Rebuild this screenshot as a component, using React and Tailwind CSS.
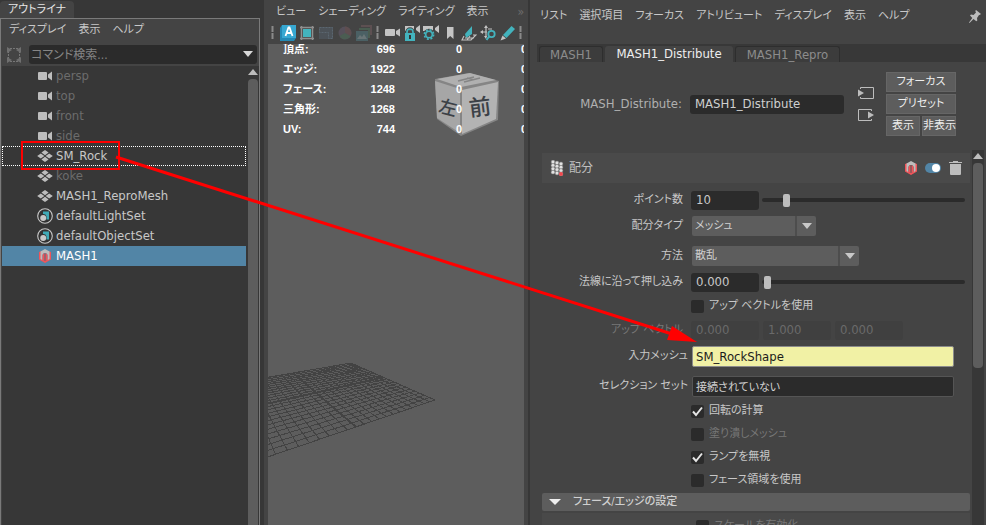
import React from "react";
import clsx from "clsx";

const outlinerRows = [
  { name: "persp", icon: "camera", dim: true },
  { name: "top", icon: "camera", dim: true },
  { name: "front", icon: "camera", dim: true },
  { name: "side", icon: "camera", dim: true },
  { name: "SM_Rock", icon: "mesh", focused: true },
  { name: "koke", icon: "mesh", dim: true },
  { name: "MASH1_ReproMesh", icon: "mesh" },
  { name: "defaultLightSet", icon: "set" },
  { name: "defaultObjectSet", icon: "set" },
  { name: "MASH1", icon: "mash", selected: true },
];

const hudRows = [
  ["頂点:", "696"],
  ["エッジ:", "1922"],
  ["フェース:", "1248"],
  ["三角形:", "1268"],
  ["UV:", "744"],
];

/* ---------- icons ---------- */

function CameraIcon() {
  return (
    <svg width="16" height="16" viewBox="0 0 16 16" fill="#bdbdbd">
      <rect x="1" y="4" width="9" height="8" rx="1" />
      <path d="M15 3.5v9l-4-3v-3z" />
    </svg>
  );
}

function MeshIcon() {
  return (
    <svg width="16" height="16" viewBox="0 0 16 16" fill="#bdbdbd">
      <path d="M8 2l3.6 2.6L8 7.2 4.4 4.6zM8 8.8l3.6 2.6L8 14l-3.6-2.6zM3.8 5.4L7.4 8l-3.6 2.6L.2 8zM12.2 5.4L15.8 8l-3.6 2.6L8.6 8z" />
    </svg>
  );
}

function SetIcon() {
  return (
    <svg width="16" height="16" viewBox="0 0 16 16">
      <circle cx="8" cy="8" r="7.3" fill="#333" stroke="#c8c8c8" strokeWidth="1.1" />
      <path d="M6 3.5h6v8H9.500V8.500A3 3 0 0 0 6 6z" fill="#3fa9b5" />
      <circle cx="6.200" cy="10" r="3" fill="#c8c8c8" />
    </svg>
  );
}

function MashIcon() {
  return (
    <svg className="shrink-0" width="16" height="16" viewBox="0 0 16 16">
      <path d="M2 4L5 3v8.500l3 1.500 3-1.500V3l3 1v7.500L8 15l-6-3.500z" fill="#f0545a" />
      <path d="M3.500 3.500L8 1l4.500 2.500V11l-2 1.200V7.500a2.500 2.500 0 0 0-5 0v4.700l-2-1.200z" fill="#bdbdbd" />
      <path d="M5.500 7.500a2.500 2.500 0 0 1 1.800-2.300V13l-1.800-.8zM10.500 7.500a2.500 2.500 0 0 0-1.800-2.300V13l1.800-.8z" fill="#f0545a" />
      <path d="M7.300 5.500h1.400V13H7.300z" fill="#a85b5f" />
    </svg>
  );
}

function DistributeIcon() {
  return (
    <svg width="14" height="16" viewBox="0 0 14 16">
      <g fill="#e2e2e2" stroke="#777" strokeWidth=".5">
        {[0, 1, 2].map((col) =>
          [0, 1, 2, 3].map((row) => (
            <circle key={`${col}-${row}`} cx={3 + col * 4} cy={2 + row * 3.4 + col * 0.9} r="1.9" />
          ))
        )}
      </g>
      <circle cx="11" cy="14" r="2" fill="#f0484e" />
    </svg>
  );
}

const rowIcons = { camera: CameraIcon, mesh: MeshIcon, set: SetIcon, mash: MashIcon };

function Grip() {
  return (
    <svg className="shrink-0" width="10" height="18" viewBox="0 0 10 18">
      <path d="M4.500 2v14" stroke="#8a8a8a" strokeWidth="2" strokeDasharray="6 1" />
    </svg>
  );
}

function ToolButton({ label, children }) {
  return (
    <button type="button" aria-label={label} className="flex w-[19px] shrink-0 items-center justify-center">
      <svg width="16" height="16" viewBox="0 0 16 16">
        {children}
      </svg>
    </button>
  );
}

function ViewportToolbar() {
  return (
    <div className="flex h-[22px] items-center overflow-hidden">
      <Grip />
      <ToolButton label="Arnold">
        <path d="M0 3l2-3h14v13l-2 3H0z" fill="#2389b5" />
        <rect x="2" y="0" width="14" height="13" fill="#37a8d2" />
        <path d="M5.500 11L8.500 2.500h1l3 8.500M6.700 8h4.600" fill="none" stroke="#fff" strokeWidth="1.800" />
      </ToolButton>
      <ToolButton label="選択項目の分離">
        <path d="M2.500 1v14M13.500 1v14M1 2.500h14M1 13.500h14" stroke="#8f8f8f" strokeWidth="1.500" />
        <rect x="4" y="4" width="8" height="8" fill="#43b3bd" />
      </ToolButton>
      <ToolButton label="レンダー領域">
        <rect x="1" y="2" width="14" height="12" fill="#4c5258" />
        <path d="M1.500 2.500h13v11h-4V7.500h-9z" fill="none" stroke="#5b6670" strokeDasharray="2 1" />
      </ToolButton>
      <ToolButton label="カラー">
        <circle cx="8" cy="8" r="6.500" fill="#56505a" />
        <path d="M8 8V1.500A6.500 6.500 0 0 1 13.600 11z" fill="#5f4e50" />
        <path d="M8 8l5.600 3.200A6.500 6.500 0 0 1 2.400 11z" fill="#4b5d52" />
      </ToolButton>
      <ToolButton label="イメージ">
        <path d="M5 1h10v9" fill="none" stroke="#5d5052" strokeWidth="2" />
        <path d="M3 4h10v9" fill="none" stroke="#4a5d51" strokeWidth="2" />
        <rect x="0" y="6" width="12" height="10" fill="#4b6064" />
        <path d="M1 14l3-4 2 2 2-3 3 5z" fill="#6a7577" />
      </ToolButton>
      <Grip />
      <ToolButton label="カメラを選択">
        <rect x="0" y="4" width="10" height="7" rx="1" fill="#c4c4c4" />
        <path d="M15 3.500v8L11 9V6z" fill="#c4c4c4" />
      </ToolButton>
      <ToolButton label="カメラをロック">
        <path d="M1 6V1h9v5M16 0v8l-4-3V3z" fill="#c4c4c4" />
        <path d="M3 8.500V7a3 3 0 0 1 6 0v1.500" fill="none" stroke="#444" strokeWidth="3.500" />
        <path d="M3 8.500V7a3 3 0 0 1 6 0v1.500" fill="none" stroke="#43b3bd" strokeWidth="1.600" />
        <rect x="1" y="8" width="10" height="8" fill="#43b3bd" />
        <rect x="5" y="10" width="2" height="4" fill="#333" />
      </ToolButton>
      <ToolButton label="カメラ アトリビュート">
        <path d="M0 6V1h10v5M16 0v8l-4-3V3z" fill="#c4c4c4" />
        <circle cx="6" cy="9.500" r="5.800" fill="#444" />
        <circle cx="6" cy="9.500" r="3.300" fill="none" stroke="#43b3bd" strokeWidth="1.600" />
        <circle cx="6" cy="9.500" r="4.700" fill="none" stroke="#43b3bd" strokeWidth="1.500" strokeDasharray="2 1.690" />
      </ToolButton>
      <ToolButton label="ブックマーク">
        <path d="M5 2h6.500v12L8.200 11 5 14z" fill="#c4c4c4" />
      </ToolButton>
      <ToolButton label="イメージ プレーン">
        <path d="M4 9l7-8v8l-6 4z" fill="#43b3bd" />
        <path d="M3 11l-2 4h9l5-5h-3M4 13h9M9 11l-3 4" fill="none" stroke="#c4c4c4" strokeWidth="1.100" />
      </ToolButton>
      <ToolButton label="2D パン/ズーム">
        <path d="M6 0l2 3H4zM0 7l3-2v4zM6 14l-2-3h3z" fill="#c4c4c4" />
        <path d="M6 2v10M2 7h5M8 4h4" stroke="#c4c4c4" strokeWidth="1.200" />
        <circle cx="11.500" cy="9" r="3.200" fill="none" stroke="#43b3bd" strokeWidth="1.800" />
        <path d="M9.200 11.300L6.500 15" stroke="#43b3bd" strokeWidth="2" />
      </ToolButton>
      <ToolButton label="グリース ペンシル">
        <path d="M12.500 1L16 4 7.500 13 4 10z" fill="#43b3bd" />
        <path d="M3.500 10.500L7 13.500 1.500 15.500z" fill="#c4c4c4" />
      </ToolButton>
      <Grip />
    </div>
  );
}

/* ---------- outliner ---------- */

function MenuBar({ items, className }) {
  return (
    <nav className={clsx("flex items-center gap-3 overflow-hidden whitespace-nowrap text-[11px] text-[#c8c8c8]", className)}>
      {items.map((item) => (
        <button key={item} type="button">
          {item}
        </button>
      ))}
    </nav>
  );
}

function Outliner() {
  return (
    <aside className="flex w-[262px] shrink-0 flex-col bg-[#373737]">
      <div className="mt-px h-[17px] w-[74px] rounded-t-sm bg-[#444444] text-center text-[11px] leading-[17px] text-[#e6e6e6]">
        アウトライナ
      </div>
      <div className="mr-[2px] flex min-h-0 flex-1 flex-col border border-b-0 border-[#7a7a7a] bg-[#444444]">
        <MenuBar className="h-[22px] pl-2" items={["ディスプレイ", "表示", "ヘルプ"]} />
        <div className="flex items-center pt-1 pb-[2px] pl-[6px] pr-[2px]">
          <svg className="mr-2 shrink-0" width="14" height="16" viewBox="0 0 14 16">
            <path d="M3 1.500h8M3 14.500h8M1.500 4v8M12.500 4v8" stroke="#777" strokeDasharray="2 1" />
            <path d="M0 0l5 3-5 3zM14 0L9 3l5 3zM0 16l5-3-5-3zM14 16l-5-3 5-3z" fill="#6f6f6f" />
          </svg>
          <div className="relative flex-1">
            <input
              type="text"
              aria-label="コマンド検索"
              placeholder="コマンド検索..."
              className="block h-[19px] w-full rounded-[3px] bg-[#2b2b2b] px-[2px] text-xs text-[#c8c8c8] outline-none placeholder:text-[#858585]"
            />
            <svg className="absolute top-[6px] right-1" width="10" height="6" viewBox="0 0 10 6">
              <path d="M0 0h10L5 6z" fill="#d8d8d8" />
            </svg>
          </div>
        </div>
        <div className="flex min-h-0 flex-1 pl-px">
          <ul className="flex-1 bg-[#373737] text-[13px]">
            {outlinerRows.map((row) => {
              const Icon = rowIcons[row.icon];
              return (
                <li
                  key={row.name}
                  className={clsx(
                    "flex h-5 items-center gap-[3px] border border-transparent pl-[34px]",
                    row.focused && "border-dotted border-white!",
                    row.selected && "bg-[#5285a6]",
                    row.dim ? "text-[#6c6c6c]" : row.selected ? "text-white" : "text-[#c8c8c8]"
                  )}
                >
                  <Icon />
                  <span>{row.name}</span>
                </li>
              );
            })}
          </ul>
          <div className="flex w-[13px] flex-col items-center bg-[#373737] pt-[3px]">
            <svg width="10" height="6" viewBox="0 0 10 6">
              <path d="M5 0l5 6H0z" fill="#bdbdbd" />
            </svg>
            <div className="mt-1 w-[10px] flex-1 rounded-t-[4px] bg-[#5d5d5d]" />
          </div>
        </div>
      </div>
    </aside>
  );
}

/* ---------- viewport ---------- */

// Perspective mapping of the ground plane onto the viewport.
// u runs from the far corner to the right corner, v runs to the left.
function project(u, v) {
  const w = 1 - 0.3695 * u - 0.13 * v;
  return [(83 + 22.3 * u - 61.3 * v) / w, (19 + 16.3 * u + 6.2 * v) / w];
}

const gridLines = [];
for (let i = 0; i <= 24; i++) {
  const t = i / 24;
  gridLines.push({ from: project(t, 0), to: project(t, 2), axis: i === 12 });
  gridLines.push({ from: project(0, t * 2), to: project(1, t * 2), axis: i === 12 });
}

function GroundGrid() {
  return (
    <svg className="absolute top-[300px] left-0" width="200" height="150" viewBox="0 0 200 150" shapeRendering="crispEdges">
      {gridLines.map((line, i) => (
        <line
          key={i}
          x1={line.from[0]}
          y1={line.from[1]}
          x2={line.to[0]}
          y2={line.to[1]}
          stroke="#434343"
          strokeWidth={line.axis ? 2 : 1}
        />
      ))}
    </svg>
  );
}

function ViewCube() {
  return (
    <svg className="absolute top-[28px] left-[166px]" width="68" height="66" viewBox="0 0 68 66">
      <path d="M1 7L35 1l30 8-1 39-37 16L3 47z" fill="#858585" />
      <path d="M3 7L36 1l26 7-35 7z" fill="#b0b0b0" />
      <path d="M1 9l25 8v44L3 46z" fill="#a6a6a6" />
      <path d="M28 18l36-8-2 37-34 15z" fill="#b3b3b3" />
      <path d="M24 9l16-4M30 10l16-4M33 6l7 2" stroke="#858585" strokeWidth="1.5" />
      <text x="14" y="42" fontSize="18" fontWeight="500" fill="#3c4147" textAnchor="middle" transform="rotate(14 14 36)">左</text>
      <text x="46" y="43" fontSize="22" fontWeight="500" fill="#3c4147" textAnchor="middle" transform="rotate(-7 46 36)">前</text>
    </svg>
  );
}

function Viewport() {
  return (
    <main className="flex w-[268px] shrink-0 flex-col border-x-2 border-[#373737] bg-[#444444] px-1">
      <div className="flex h-[22px] items-center justify-between pt-[2px] pl-2">
        <MenuBar items={["ビュー", "シェーディング", "ライティング", "表示"]} />
        <span className="text-xs text-[#6c6c6c]">»</span>
      </div>
      <ViewportToolbar />
      <div className="relative flex-1 overflow-hidden bg-[#5d5d5d]">
        <GroundGrid />
        <ViewCube />
        <div className="relative -mt-[5px] font-['Liberation_Sans','Noto_Sans_CJK_JP',sans-serif] text-[11px] font-bold text-white">
          {hudRows.map(([label, value]) => (
            <div key={label} className="flex h-5 items-center whitespace-nowrap pl-[15px]">
              <span className="w-[52px] shrink-0">{label}</span>
              <span className="w-[60px] shrink-0 text-right">{value}</span>
              <span className="w-[67px] shrink-0 text-right">0</span>
              <span className="w-[65px] shrink-0 text-right">0</span>
            </div>
          ))}
        </div>
      </div>
    </main>
  );
}

/* ---------- attribute editor ---------- */

function Field({ label, htmlFor, wide, disabled, className, children }) {
  return (
    <div className={clsx("flex h-5 items-center", wide ? "gap-1" : "gap-2", className)}>
      <label
        htmlFor={htmlFor}
        className={clsx(
          "shrink-0 text-right text-[11px] whitespace-nowrap",
          wide ? "w-[146px]" : "w-[141px]",
          disabled ? "text-[#777777]" : "text-[#c8c8c8]"
        )}
      >
        {label}
      </label>
      {children}
    </div>
  );
}

function NumberBox({ id, value, label, disabled }) {
  return (
    <input
      id={id}
      type="text"
      aria-label={label}
      defaultValue={value}
      disabled={disabled}
      className="h-[19px] w-[68px] shrink-0 rounded-[3px] bg-[#2b2b2b] px-[5px] text-[13px] text-[#c8c8c8] disabled:bg-[#404040] disabled:text-[#6a6a6a]"
    />
  );
}

function Slider({ label, value, max }) {
  return (
    <input
      type="range"
      aria-label={label}
      defaultValue={value}
      max={max}
      className="mr-[5px] ml-[-5px] h-[13px] min-w-0 flex-1 appearance-none bg-transparent [&::-webkit-slider-runnable-track]:h-1 [&::-webkit-slider-runnable-track]:rounded-full [&::-webkit-slider-runnable-track]:bg-[#2b2b2b] [&::-webkit-slider-thumb]:-mt-1 [&::-webkit-slider-thumb]:h-[13px] [&::-webkit-slider-thumb]:w-[7px] [&::-webkit-slider-thumb]:appearance-none [&::-webkit-slider-thumb]:rounded-[2px] [&::-webkit-slider-thumb]:bg-[#bdbdbd]"
    />
  );
}

function Dropdown({ id, value, className }) {
  return (
    <div className={clsx("relative ml-px", className)}>
      <select id={id} defaultValue={value} className="block h-5 w-full appearance-none rounded-[2px] bg-[#5d5d5d] px-[3px] text-[11px] text-[#d0d0d0]">
        <option>{value}</option>
      </select>
      <span className="pointer-events-none absolute inset-y-0 right-0 flex w-[21px] items-center justify-center border-l-2 border-[#4d4d4d]">
        <svg width="10" height="6" viewBox="0 0 10 6">
          <path d="M0 0h10L5 6z" fill="#c8c8c8" />
        </svg>
      </span>
    </div>
  );
}

function Checkbox({ label, checked, disabled, className }) {
  return (
    <label className={clsx("flex items-center gap-[5px] text-[11px] whitespace-nowrap", disabled ? "text-[#777777]" : "text-[#c8c8c8]", className)}>
      <span className="relative h-[13px] w-[13px]">
        <input
          type="checkbox"
          defaultChecked={checked}
          disabled={disabled}
          className="peer block h-[13px] w-[13px] appearance-none rounded-[2px] bg-[#2b2b2b]"
        />
        <svg className="pointer-events-none absolute inset-0 hidden peer-checked:block" width="13" height="13" viewBox="0 0 13 13">
          <path d="M2 6.500l3 3.500 6-7.500" fill="none" stroke="#e6e6e6" strokeWidth="2" />
        </svg>
      </span>
      {label}
    </label>
  );
}

function PanelButton({ children, className }) {
  return (
    <button
      type="button"
      className={clsx("h-5 border border-[#666666] bg-[#5d5d5d] text-center text-[11px] leading-[18px] whitespace-nowrap text-[#eeeeee]", className)}
    >
      {children}
    </button>
  );
}

function EditorTabs() {
  return (
    <div className="ml-[7px] flex h-[18px] shrink-0 items-end gap-[2px] overflow-hidden bg-[#383838] pl-[2px] text-[13px]">
      <button type="button" className="h-4 w-16 rounded-t-[3px] border border-b-0 border-[#2e2e2e] bg-[#3c3c3c] leading-4 text-[#8c8c8c]">MASH1</button>
      <button type="button" className="h-4 w-32 rounded-t-[3px] bg-[#444444] leading-4 text-[#eeeeee]">MASH1_Distribute</button>
      <button type="button" className="h-4 w-[105px] rounded-t-[3px] border border-b-0 border-[#2e2e2e] bg-[#3c3c3c] leading-4 text-[#8c8c8c]">MASH1_Repro</button>
    </div>
  );
}

function NodeHeader() {
  return (
    <div className="flex h-[88px] shrink-0 pt-[10px] pr-[30px] pl-3">
      <div className="flex h-16 flex-1 items-center">
        <label htmlFor="node-name" className="w-[140px] shrink-0 text-right text-[13px] text-[#b0b0b0]">
          MASH_Distribute:
        </label>
        <input
          id="node-name"
          type="text"
          defaultValue="MASH1_Distribute"
          className="ml-2 h-[19px] w-[154px] min-w-0 rounded-[3px] bg-[#2b2b2b] px-[5px] text-[13px] text-[#d0d0d0]"
        />
        <div className="ml-[13px] flex shrink-0 flex-col gap-2">
          <svg width="18" height="14" viewBox="0 0 18 14">
            <path d="M3.500 3V1.500h13v11h-13V11" fill="none" stroke="#bdbdbd" />
            <path d="M1 3.500l6 3.500-6 3.500z" fill="#bdbdbd" />
          </svg>
          <svg width="18" height="14" viewBox="0 0 18 14">
            <path d="M14.500 3V1.500H1.500v11h13V11" fill="none" stroke="#bdbdbd" />
            <path d="M11 3.500l6 3.500-6 3.500z" fill="#bdbdbd" />
          </svg>
        </div>
      </div>
      <div className="grid h-16 w-[70px] shrink-0 grid-cols-2 gap-[2px]">
        <PanelButton className="col-span-2">フォーカス</PanelButton>
        <PanelButton className="col-span-2">プリセット</PanelButton>
        <PanelButton>表示</PanelButton>
        <PanelButton>非表示</PanelButton>
      </div>
    </div>
  );
}

function DistributeHeader() {
  return (
    <div className="flex h-[30px] items-center bg-[#4a4a4a] pr-2 pl-2 text-xs text-[#c0c0c0]">
      <DistributeIcon />
      <span className="ml-[5px] flex-1">配分</span>
      <MashIcon />
      <label className="relative ml-[6px] flex h-[10px] w-4">
        <input type="checkbox" defaultChecked aria-label="有効化" className="h-[10px] w-4 appearance-none rounded-full bg-[#5285a6]" />
        <span className="pointer-events-none absolute top-px right-px h-2 w-2 rounded-full bg-white" />
      </label>
      <button type="button" aria-label="削除" className="ml-2">
        <svg width="13" height="14" viewBox="0 0 13 14" fill="#bdbdbd">
          <path d="M0 1h4V0h5v1h4v1H0zM1 3h11v10a1 1 0 0 1-1 1H2a1 1 0 0 1-1-1z" />
        </svg>
      </button>
    </div>
  );
}

function AttributeEditor() {
  return (
    <section className="flex min-w-0 flex-1 flex-col bg-[#444444]">
      <div className="flex h-11 shrink-0 items-start pt-[6px] pr-[5px] pl-[10px]">
        <MenuBar className="h-5 flex-1" items={["リスト", "選択項目", "フォーカス", "アトリビュート", "ディスプレイ", "表示", "ヘルプ"]} />
        <button type="button" aria-label="ピン" className="mt-1">
          <svg width="12" height="13" viewBox="0 0 12 13" fill="#bdbdbd">
            <path d="M7 0l5 4-1.500 1L10 5 8 8l.3 2.500-1 .8L4.500 9 .5 13 0 12.500 3.300 8 1 5.500l1-1L4.500 5 7 2.500 6.300 1z" />
          </svg>
        </button>
      </div>
      <EditorTabs />
      <NodeHeader />

      <div className="flex min-h-0 flex-1">
        <div className="min-w-0 flex-1 overflow-hidden pt-[3px] pl-3">
          <DistributeHeader />

          <div className="pt-[7px]">
            <Field label="ポイント数" htmlFor="points">
              <NumberBox id="points" value="10" />
              <Slider label="ポイント数スライダ" value={10} max={95} />
            </Field>
            <Field className="mt-[6px]" label="配分タイプ" htmlFor="dist-type">
              <Dropdown id="dist-type" value="メッシュ" className="w-[124px]" />
            </Field>
            <Field className="mt-[10px]" label="方法" htmlFor="method">
              <Dropdown id="method" value="散乱" className="w-[167px]" />
            </Field>
            <Field className="mt-[6px]" label="法線に沿って押し込み" htmlFor="push">
              <NumberBox id="push" value="0.000" />
              <Slider label="押し込みスライダ" value={1} max={100} />
            </Field>
            <Checkbox className="mt-1 ml-[149px] h-5" label="アップ ベクトルを使用" />
            <Field className="mt-1" label="アップ ベクトル" htmlFor="up-x" disabled>
              <div className="flex gap-1">
                <NumberBox id="up-x" value="0.000" disabled />
                <NumberBox label="Y" value="1.000" disabled />
                <NumberBox label="Z" value="0.000" disabled />
              </div>
            </Field>
            <Field className="mt-[6px]" wide label="入力メッシュ" htmlFor="input-mesh">
              <input
                id="input-mesh"
                type="text"
                defaultValue="SM_RockShape"
                className="mr-4 h-[21px] min-w-0 flex-1 rounded-[2px] border border-[#8c8c8c] bg-[#f1f1a5] px-[3px] text-[13px] text-[#1c1c1c]"
              />
            </Field>
            <Field className="mt-[10px]" wide label="セレクション セット" htmlFor="selection-set">
              <input
                id="selection-set"
                type="text"
                defaultValue="接続されていない"
                className="mr-4 h-[21px] min-w-0 flex-1 rounded-[2px] border border-[#555555] bg-[#2b2b2b] px-[3px] text-[11px] text-[#d0d0d0]"
              />
            </Field>
            <div className="mt-1 ml-[149px]">
              <Checkbox className="h-[23px]" label="回転の計算" checked />
              <Checkbox className="h-[23px]" label="塗り潰しメッシュ" disabled />
              <Checkbox className="h-[23px]" label="ランプを無視" checked />
              <Checkbox className="h-[23px]" label="フェース領域を使用" />
            </div>
          </div>

          <button type="button" className="mt-px flex h-[18px] w-full items-center gap-3 rounded-[2px] bg-[#5d5d5d] pl-[7px] text-[11px] font-medium text-[#d0d0d0]">
            <svg width="12" height="6" viewBox="0 0 12 6">
              <path d="M0 0h12L6 6z" fill="#eeeeee" />
            </svg>
            フェース/エッジの設定
          </button>
          <div className="mt-[2px] h-20 bg-[#494949] pt-[5px] pl-[154px]">
            <Checkbox className="h-4" label="スケールを有効化" disabled />
          </div>
        </div>

        <div className="mr-[2px] ml-[2px] flex w-3 shrink-0 flex-col items-center bg-[#373737] pt-[3px]">
          <svg width="10" height="6" viewBox="0 0 10 6">
            <path d="M5 0l5 6H0z" fill="#bdbdbd" />
          </svg>
          <div className="mt-1 h-[205px] w-[10px] rounded-[4px] bg-[#5d5d5d]" />
        </div>
      </div>
    </section>
  );
}

// Red marker that links the outliner node to the input mesh field
function Annotation() {
  return (
    <svg className="pointer-events-none absolute top-0 left-0" width="710" height="360" viewBox="0 0 710 360">
      <rect x="22" y="142" width="97" height="27" fill="none" stroke="#ff0000" strokeWidth="2" />
      <path d="M116 157L672 334" stroke="#ff0000" strokeWidth="3" />
      <path d="M672 326l25 16-30-2z" fill="#ff0000" />
    </svg>
  );
}

export default function App() {
  return (
    <div className="relative flex h-screen overflow-hidden bg-[#444444] font-['DejaVu_Sans_Condensed','Noto_Sans_CJK_JP',sans-serif] [font-feature-settings:'palt']">
      <Outliner />
      <Viewport />
      <AttributeEditor />
      <Annotation />
    </div>
  );
}
